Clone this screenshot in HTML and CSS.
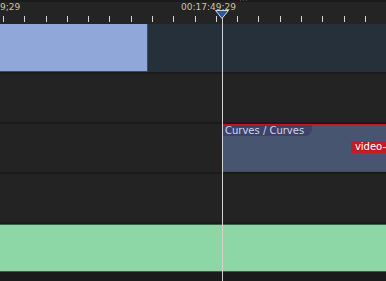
FILE: index.html
```html
<!DOCTYPE html>
<html lang="en">
<head>
  <meta charset="UTF-8">
  <title>Timeline</title>
  <link rel="stylesheet" href="styles.css">
</head>
<body>
  <div class="timeline">
    <div class="ruler">
      <div class="ruler-top"><span class="grip"></span></div>
      <div class="labels">
        <span class="time-left">9;29</span>
        <span class="time-cur">00:17:49:29</span>
      </div>
      <div class="ticks">
        <i></i><i></i><i></i><i></i><i></i><i></i><i></i><i></i><i></i>
        <i></i><i></i><i></i><i></i><i></i><i></i><i></i><i></i><i></i>
      </div>
    </div>

    <div class="track">
      <div class="clip clip-blue"></div>
      <div class="clip-rest"></div>
    </div>
    <div class="track"></div>
    <div class="track">
      <div class="gap-left"></div>
      <div class="clip clip-fx">
        <span class="fx-tab">Curves / Curves</span>
        <span class="fx-badge">video-</span>
      </div>
    </div>
    <div class="track"></div>
    <div class="track">
      <div class="clip clip-audio"></div>
    </div>

    <div class="playhead">
      <svg class="marker" width="14" height="9" viewBox="0 0 14 9">
        <polygon points="0.5,0.5 13.5,0.5 7,8.5" fill="#2b5b98" stroke="#cfd6e0" stroke-width="1"/>
      </svg>
    </div>
  </div>
</body>
</html>
```

FILE: styles.css
```css
html, body {
  margin: 0;
  padding: 0;
  background: #1b1b1b;
}
.timeline {
  position: relative;
  width: 386px;
  height: 281px;
  overflow: hidden;
  font-family: "DejaVu Sans", sans-serif;
}
.ruler {
  height: 24px;
  background: #242424;
  position: relative;
}
.ruler-top {
  height: 2px;
  background: #1b1b1b;
  position: relative;
}
/* little drag handle dots */
.grip {
  position: absolute;
  left: 240px;
  top: 0;
  width: 7px;
  height: 1px;
  background: repeating-linear-gradient(90deg, #454545 0 1px, transparent 1px 3px);
}
.labels {
  position: relative;
  height: 12px;
  font-size: 9px;
  color: #cfc1a1;
}
.time-left {
  position: absolute;
  left: 0;
  top: 0;
}
.time-cur {
  position: absolute;
  left: 181px;
  top: 0;
}
.ticks {
  display: flex;
  padding-left: 3px;
  margin-top: 2px;
}
.ticks i {
  display: block;
  width: 1px;
  height: 6px;
  background: #d4d4d4;
  margin-right: 20.67px;
}
.track {
  height: 48px;
  background: #232323;
  border-bottom: 2px solid #1b1b1b;
  display: flex;
}
.clip {
  box-sizing: border-box;
  height: 48px;
}
.clip-blue {
  width: 148px;
  background: #8fa7d9;
  border-right: 1px solid #3b4a66;
  border-bottom: 1px solid #3b4a66;
}
.clip-rest {
  flex: 1;
  background: #26303a;
}
.gap-left {
  width: 222px;
}
.clip-fx {
  flex: 1;
  position: relative;
  background: #475570;
  border: 1px solid #c2161d;
  border-right: none;
}
.fx-tab {
  position: absolute;
  left: 0;
  top: 0;
  padding: 0 8px 0 2px;
  height: 11px;
  line-height: 11px;
  font-size: 10px;
  color: #d3d3ea;
  background: #3d4368;
  border-bottom-right-radius: 7px;
}
.fx-badge {
  position: absolute;
  right: 0;
  top: 16px;
  padding: 0 0 0 4px;
  height: 12px;
  line-height: 12px;
  font-size: 10px;
  color: #ffffff;
  background: #c21c27;
  border-radius: 2px 0 0 2px;
}
.clip-audio {
  flex: 1;
  background: #8dd7a7;
  border-top: 1px solid #3c5c4a;
  border-bottom: 1px solid #3c5c4a;
}
.playhead {
  position: absolute;
  left: 222px;
  top: 14px;
  bottom: 0;
  width: 1px;
  background: #d2d2d2;
}
.marker {
  position: absolute;
  left: -7px;
  top: -4px;
}
```
